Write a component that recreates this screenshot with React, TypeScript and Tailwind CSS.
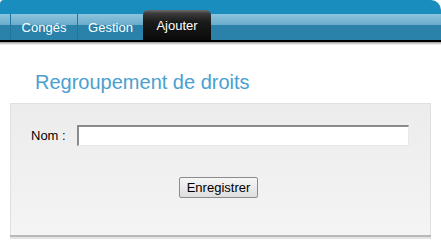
import React from 'react';

const Tab: React.FC<{ label: string; active?: boolean; w: string }> = ({ label, active, w }) =>
  active ? (
    <div
      className={`${w} h-[30px] rounded-t-[5px] bg-[linear-gradient(to_bottom,#6a6a6a_0%,#3a3a3a_12%,#1a1a1a_40%,#0a0a0a_100%)] text-white text-[13px] flex justify-center pt-[6px]`}
    >
      {label}
    </div>
  ) : (
    <div className={`${w} h-[26px] border-l border-[#2173a0] text-white text-[13px] flex items-center justify-center pt-[2px]`}>
      {label}
    </div>
  );

export default function App() {
  return (
    <div className="w-[441px] h-[250px] bg-white font-['Liberation_Sans',Arial,sans-serif] overflow-hidden">
      <div className="relative">
        <div className="h-[40px] rounded-tl-[4px] rounded-tr-[10px] bg-[#1a8dbf] flex flex-col justify-end">
          <div className="h-[26px] bg-[linear-gradient(to_bottom,#8cc4dd_0%,#6aaccb_42%,#2a82aa_42%,#2a82aa_100%)] flex items-end pl-[10px]">
            <Tab label="Congés" w="w-[67px]" />
            <Tab label="Gestion" w="w-[66px]" />
            <Tab label="Ajouter" w="w-[68px]" active />
          </div>
        </div>
        <div className="h-[2px] bg-black" />
        <div className="h-[3px] bg-[linear-gradient(to_bottom,#9a9a9a,#ffffff)]" />
      </div>

      <h1 className="text-[20px] text-[#4aa0cf] pl-[35px] pt-[25px] leading-[24px]">Regroupement de droits</h1>

      <div className="mt-[9px] mx-[10px] w-[421px] border border-[#e0e0e0] border-b-0 bg-[linear-gradient(to_bottom,#ececec,#f4f4f4)]">
        <div className="flex items-center pl-[20px] pt-[21px]">
          <span className="text-[13px] text-black w-[46px]">Nom :</span>
          <input
            type="text"
            className="w-[332px] h-[21px] bg-white border border-[#e8e8e8] border-t-2 border-l-2 border-t-[#8a8a8a] border-l-[#8a8a8a] outline-none"
          />
        </div>
        <div className="flex justify-center pt-[31px] pb-[37px] pr-[4px]">
          <button className="h-[21px] px-[7px] text-[13px] text-black border border-[#8c8c8c] rounded-[2px] bg-[linear-gradient(to_bottom,#f6f6f6,#dedede)]">
            Enregistrer
          </button>
        </div>
      </div>
      <div className="mx-[10px] w-[421px] h-[2px] bg-[#b8b8b8]" />
      <div className="mx-[10px] w-[421px] h-[2px] bg-[#e4e4e4]" />
    </div>
  );
}
